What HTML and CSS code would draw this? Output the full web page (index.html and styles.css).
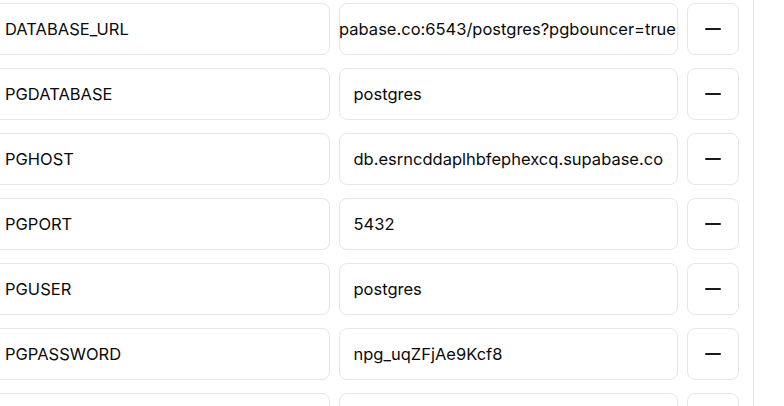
FILE: index.html
```html
<!DOCTYPE html>
<html>
<head>
<meta charset="utf-8">
<link rel="stylesheet" href="styles.css">
</head>
<body>
<div class="layout">
  <main class="main">
    <div class="list">
      <div class="row">
        <div class="field">DATABASE_URL</div>
        <div class="field field-scrolled"><span>postgresql://postgres:npg_uqZFjAe9Kcf8@db.esrncddaplhbfephexcq.supabase.co:6543/postgres?pgbouncer=true</span></div>
        <button class="remove" type="button"><svg viewBox="0 0 24 24" width="24" height="24"><path d="M5 12h14"/></svg></button>
      </div>
      <div class="row">
        <div class="field">PGDATABASE</div>
        <div class="field">postgres</div>
        <button class="remove" type="button"><svg viewBox="0 0 24 24" width="24" height="24"><path d="M5 12h14"/></svg></button>
      </div>
      <div class="row">
        <div class="field">PGHOST</div>
        <div class="field">db.esrncddaplhbfephexcq.supabase.co</div>
        <button class="remove" type="button"><svg viewBox="0 0 24 24" width="24" height="24"><path d="M5 12h14"/></svg></button>
      </div>
      <div class="row">
        <div class="field">PGPORT</div>
        <div class="field">5432</div>
        <button class="remove" type="button"><svg viewBox="0 0 24 24" width="24" height="24"><path d="M5 12h14"/></svg></button>
      </div>
      <div class="row">
        <div class="field">PGUSER</div>
        <div class="field">postgres</div>
        <button class="remove" type="button"><svg viewBox="0 0 24 24" width="24" height="24"><path d="M5 12h14"/></svg></button>
      </div>
      <div class="row">
        <div class="field">PGPASSWORD</div>
        <div class="field">npg_uqZFjAe9Kcf8</div>
        <button class="remove" type="button"><svg viewBox="0 0 24 24" width="24" height="24"><path d="M5 12h14"/></svg></button>
      </div>
      <div class="row">
        <div class="field"></div>
        <div class="field"></div>
        <button class="remove" type="button"><svg viewBox="0 0 24 24" width="24" height="24"><path d="M5 12h14"/></svg></button>
      </div>
    </div>
  </main>
  <aside class="aside"></aside>
</div>
</body>
</html>
```
FILE: styles.css
```css
* { box-sizing: border-box; }
html, body { margin: 0; padding: 0; background: #ffffff; }
body {
  font-family: Inter, "Liberation Sans", Arial, sans-serif;
  font-size: 16.5px;
  color: #0a0a0a;
  overflow: hidden;
}
.layout {
  display: flex;
  height: 100vh;
}
.main {
  width: 753px;
  flex: none;
  padding: 3px 14px 0 0;
  overflow: hidden;
}
.list {
  margin-left: -10px;
  display: flex;
  flex-direction: column;
  gap: 13px;
}
.row {
  display: grid;
  grid-template-columns: 1fr 1fr 52px;
  column-gap: 9px;
  height: 52px;
  flex: none;
}
.field {
  display: flex;
  align-items: center;
  height: 52px;
  padding: 0 14px;
  border: 1px solid #e6e6e6;
  border-radius: 8px;
  background: #fff;
  white-space: nowrap;
  overflow: hidden;
  min-width: 0;
}
.field-scrolled {
  padding: 0 1px 0 0;
  justify-content: flex-end;
}
.field-scrolled span { flex: none; }
.remove {
  display: flex;
  align-items: center;
  justify-content: center;
  height: 52px;
  width: 52px;
  padding: 0;
  border: 1px solid #e6e6e6;
  border-radius: 8px;
  background: #fff;
  cursor: pointer;
}
.remove svg {
  fill: none;
  stroke: #1a1a1a;
  stroke-width: 2;
  stroke-linecap: round;
}
.aside {
  flex: 1;
  border-left: 1px solid #e6e6e6;
  background: #fff;
}
```
